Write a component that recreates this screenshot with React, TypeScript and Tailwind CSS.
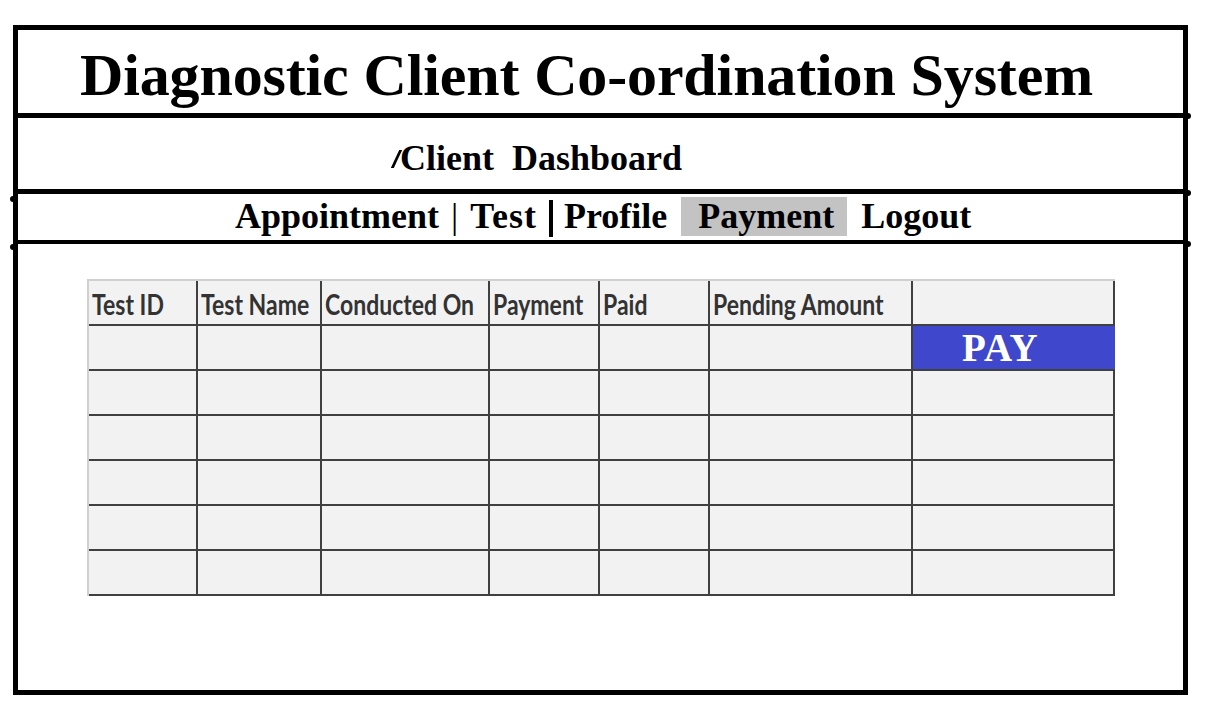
const columns = [
  { label: "Test ID", w: "w-[109px]" },
  { label: "Test Name", w: "w-[124px]" },
  { label: "Conducted On", w: "w-[168px]" },
  { label: "Payment", w: "w-[110px]" },
  { label: "Paid", w: "w-[110px]" },
  { label: "Pending Amount", w: "w-[203px]" },
  { label: "", w: "w-[202px]" },
];

const rows = [0, 1, 2, 3, 4, 5];

function Dot({ className }: { className: string }) {
  return <span className={`absolute w-[6px] h-[6px] rounded-full bg-black ${className}`} />;
}

export default function App() {
  return (
    <div className="min-h-screen bg-white pt-[25px] pl-[13px] font-['Liberation_Serif',serif] text-black">
      <div className="relative w-[1175px] h-[670px] border-[5px] border-black flex flex-col">
        {/* Title */}
        <div className="h-[83px] pl-[62px] pt-[15px]">
          <h1 className="text-[60px] leading-[60px] font-bold tracking-[-0.14px] whitespace-nowrap">
            Diagnostic Client Co-ordination System
          </h1>
        </div>
        <div className="h-[5px] bg-black" />

        {/* Subtitle */}
        <div className="h-[71px] pl-[377px] pt-[22px] flex items-start">
          <span className="inline-block w-[3px] h-[18px] mt-[10px] bg-black -skew-x-[25deg]" />
          <h2 className="ml-[2px] text-[36px] leading-[36px] font-bold whitespace-nowrap">
            Client<span className="inline-block w-[18px]" />Dashboard
          </h2>
        </div>
        <div className="h-[5px] bg-black" />

        {/* Nav */}
        <nav className="h-[46px] pt-[3px] flex items-start text-[36px] leading-[39px] font-bold whitespace-nowrap">
          <span className="ml-[217px]">Appointment</span>
          <span className="ml-[12px] font-normal">|</span>
          <span className="ml-[12px] tracking-[1px]">Test</span>
          <span className="ml-[12px] mt-[3px] w-[4px] h-[37px] bg-black" />
          <span className="ml-[11px]">Profile</span>
          <span className="ml-[14px] h-[39px] bg-[#c3c3c3] pl-[17px] pr-[13px]">Payment</span>
          <span className="ml-[14px]">Logout</span>
        </nav>
        <div className="h-[4px] bg-black" />

        {/* Payment table */}
        <div className="mt-[35px] ml-[69px] w-[1028px] border-t-2 border-l-2 border-[#d0d0d0] bg-[#f2f2f2] font-['Lato',sans-serif]">
          <div className="flex">
            {columns.map((c) => (
              <div
                key={c.label || "action"}
                className={`${c.w} h-[45px] border-r-2 border-b-2 border-[#404040] flex items-center pl-[3px] pt-[3px]`}
              >
                <span className="inline-block scale-y-[1.2] text-[23px] leading-none font-bold text-[#333] whitespace-nowrap">
                  {c.label}
                </span>
              </div>
            ))}
          </div>
          {rows.map((r) => (
            <div key={r} className="flex">
              {columns.map((c, j) =>
                r === 0 && j === columns.length - 1 ? (
                  <div
                    key={j}
                    className={`${c.w} h-[45px] border-b-2 bg-[#3f48cc] border-[#404040] pl-[49px] pt-[2px] font-['Liberation_Serif',serif]`}
                  >
                    <span className="text-[39px] leading-[39px] font-bold text-white tracking-[1px]">PAY</span>
                  </div>
                ) : (
                  <div key={j} className={`${c.w} h-[45px] border-r-2 border-b-2 border-[#404040]`} />
                )
              )}
            </div>
          ))}
        </div>

        <Dot className="left-[-8px] top-[166px]" />
        <Dot className="left-[-8px] top-[214px]" />
        <Dot className="right-[-8px] top-[83px]" />
        <Dot className="right-[-8px] top-[160px]" />
        <Dot className="right-[-8px] top-[211px]" />
      </div>
    </div>
  );
}
